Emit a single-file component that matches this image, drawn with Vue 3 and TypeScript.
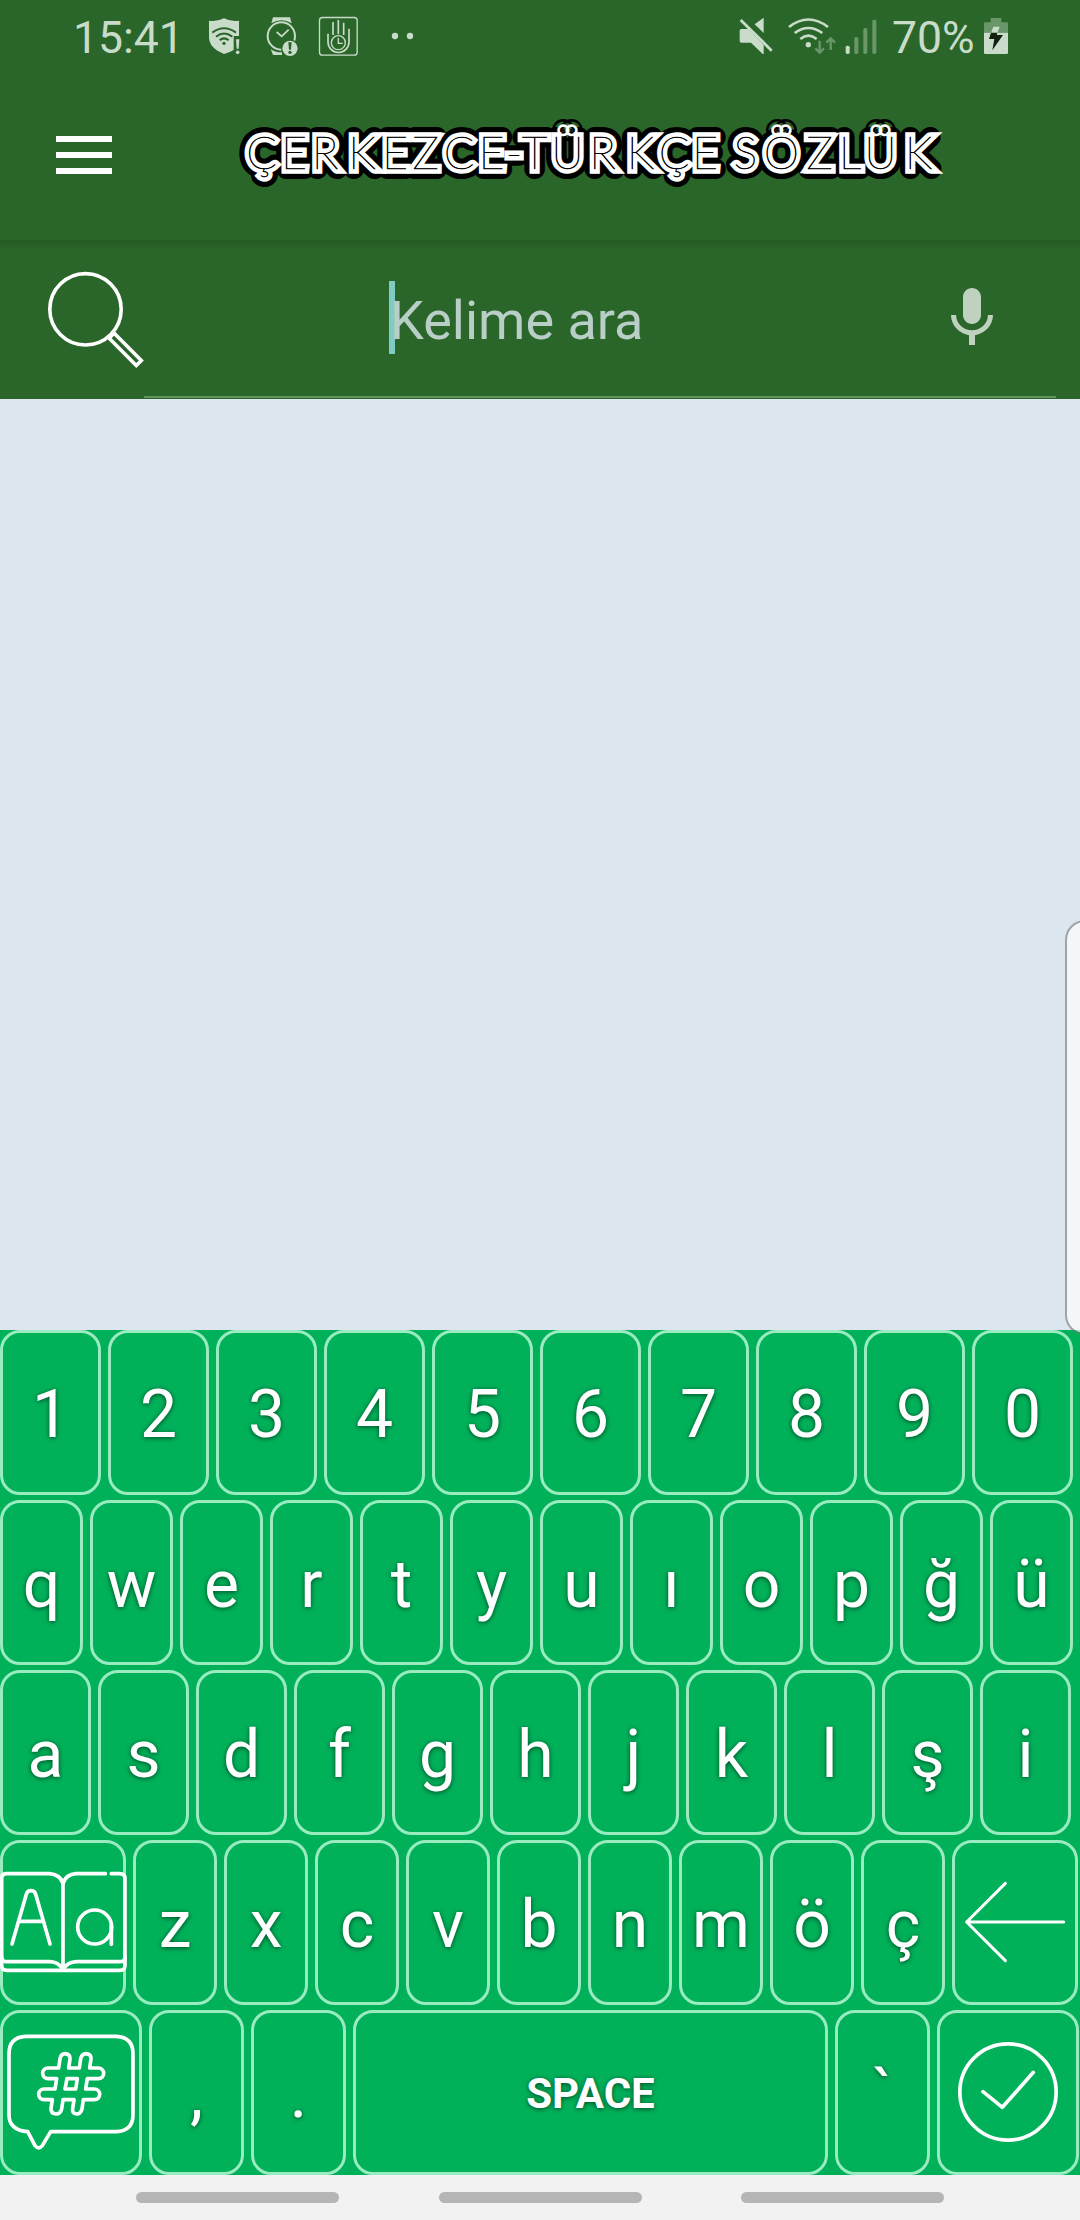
<script setup lang="ts">
interface Key {
  label: string
  width: number
  kind?: 'shift' | 'symbols' | 'back' | 'done' | 'space'
}

const letters = (chars: string, width: number): Key[] =>
  [...chars].map((label) => ({ label, width }))

const rows: Key[][] = [
  letters('1234567890', 101),
  letters('qwertyuıopğü', 83),
  letters('asdfghjklşi', 91),
  [
    { label: 'Shift', width: 126, kind: 'shift' },
    ...letters('zxcvbnmöç', 84),
    { label: 'Backspace', width: 126, kind: 'back' },
  ],
  [
    { label: 'Symbols', width: 142, kind: 'symbols' },
    { label: ',', width: 95 },
    { label: '.', width: 95 },
    { label: 'SPACE', width: 475, kind: 'space' },
    { label: '`', width: 95 },
    { label: 'Done', width: 142, kind: 'done' },
  ],
]

const title = 'ÇERKEZCE-TÜRKÇE SÖZLÜK'
const titleCentres = [
  261.5, 294, 325, 362, 395, 425.5, 459, 491.5, 514, 534.5, 567.5, 602.5, 640.5, 674, 705,
  725, 745.5, 781.5, 819.5, 850, 880.5, 918.5,
]
  .map((x) => x - 230)
  .join(' ')
</script>

<template>
  <div class="screen">
    <header class="top">
      <div class="status">
        <span class="clock">15:41</span>
        <svg class="shield" width="32" height="42" viewBox="504 45 96 126">
          <path fill="#c9dcc9" d="M507 62Q530 66 552 55Q574 66 597 62V108H581V150Q568 158 552 162Q507 144 507 112Z" />
          <g fill="none" stroke="#2a662a" stroke-width="6">
            <path d="M517 98Q552 72 588 98" />
            <path d="M528 110Q552 91 577 110" />
            <path d="M539 121Q552 109 566 121" />
          </g>
          <circle cx="552" cy="130" r="5" fill="#2a662a" />
          <path fill="#c9dcc9" d="M588 118H598L596 146H590Z" />
          <circle cx="593" cy="157" r="5.5" fill="#c9dcc9" />
        </svg>
        <svg class="watch" width="33" height="42" viewBox="678 45 99 126">
          <path fill="#c9dcc9" d="M699 52H750L755 70Q724 52 694 70ZM692 147Q706 158 726 157V165H699Z" />
          <circle cx="724" cy="108" r="41" fill="none" stroke="#c9dcc9" stroke-width="6" />
          <path fill="none" stroke="#c9dcc9" stroke-width="5" d="M710 96L725 109L746 89" />
          <circle cx="750" cy="145" r="27" fill="#2a662a" />
          <circle cx="750" cy="145" r="23" fill="#c9dcc9" />
          <path fill="#2a662a" d="M745 127H755L753 149H747Z" />
          <circle cx="750" cy="157" r="5" fill="#2a662a" />
        </svg>
        <svg class="hand" width="41" height="42" viewBox="834 45 123 126" fill="none" stroke="#c9dcc9">
          <rect x="838.500" y="52.500" width="113" height="113" rx="9" stroke-width="4" />
          <path stroke-width="5" d="M864 101V126A31 31 0 0 0 927 126V86M879 66V105M895 60V103M911 68V105" />
          <circle cx="895" cy="128" r="21" stroke-width="4" />
          <path stroke-width="4" d="M895 114V130H908" />
        </svg>
        <svg class="more" width="23" height="42" viewBox="1053 45 69 126" fill="#c9dcc9">
          <circle cx="1065" cy="108" r="9.500" />
          <circle cx="1110" cy="108" r="9.500" />
        </svg>

        <svg class="mute" width="34" height="42" viewBox="114 45 102 126" fill="#c9dcc9">
          <path d="M188 53V99L161 73Z" />
          <path d="M121 87H142L188 134V162H185L150 128H121Q116 128 116 123V92Q116 87 121 87Z" />
          <path d="M122 57L215 149L209 155L116 63Z" />
        </svg>
        <svg class="wifi" width="50" height="42" viewBox="258 45 150 126">
          <g fill="none" stroke="#c9dcc9" stroke-width="8">
            <path d="M264 81Q322 36 381 81" />
            <path d="M281 99Q322 69 364 99" />
            <path d="M298 117Q322 97 347 117" />
          </g>
          <circle cx="322" cy="134" r="8" fill="#c9dcc9" />
          <path fill="none" stroke="#6a976a" stroke-width="7" d="M356 122V157M343 145L356 158L369 145M389 150V116M376 128L389 115L402 128" />
        </svg>
        <svg class="signal" width="32" height="42" viewBox="432 45 96 126" fill="#6a976a">
          <rect x="434" y="137" width="12" height="25" rx="5" fill="#c9dcc9" />
          <rect x="460" y="111" width="12" height="51" rx="5" />
          <rect x="487" y="84" width="12" height="78" rx="5" />
          <rect x="514" y="59" width="12" height="103" rx="5" />
        </svg>
        <span class="percent">70%</span>
        <svg class="battery" width="26" height="42" viewBox="846 45 78 126">
          <path fill="#6a976a" d="M869 54H901V67H917Q921 67 921 71V98H849V71Q849 67 853 67H869Z" />
          <path fill="#c9dcc9" d="M849 98H921V158Q921 162 917 162H853Q849 162 849 158Z" />
          <path fill="#c9dcc9" d="M877 80H896L889 99H870Z" />
          <path fill="#10210f" d="M870 98H889L887 105H906L874 151L880 117H864Z" />
        </svg>
      </div>
      <div class="bar">
        <button class="menu" aria-label="Menu"><i /><i /><i /></button>
        <svg class="title" width="724" height="90" role="heading" aria-level="1">
          <text class="edge" :x="titleCentres" y="59">{{ title }}</text>
          <text class="face" :x="titleCentres" y="59">{{ title }}</text>
          <text class="inline" :x="titleCentres" y="59">{{ title }}</text>
        </svg>
      </div>
    </header>

    <section class="search">
      <svg class="lens" width="144" height="159" viewBox="0 240 144 159" fill="none" stroke="#fff" stroke-width="3.600">
        <circle cx="85.500" cy="309.300" r="35.700" />
        <path d="M114.200 333.200L141.300 360.500L136.300 365.500L109.200 338.200" />
        <path d="M108 339.300L115.300 332" />
      </svg>
      <div class="field">
        <span class="caret" />
        <span class="hint">Kelime ara</span>
        <svg class="mic" width="72" height="72" viewBox="0 0 24 24" fill="#bfd1bf">
          <path d="M12 14c1.660 0 3-1.340 3-3V5c0-1.660-1.340-3-3-3S9 3.340 9 5v6c0 1.660 1.340 3 3 3zm5.300-3c0 3-2.540 5.100-5.300 5.100S6.700 14 6.700 11H5c0 3.410 2.720 6.230 6 6.720V21h2v-3.280c3.280-.48 6-3.300 6-6.720h-1.700z" />
        </svg>
      </div>
    </section>

    <main class="results" />

    <section class="keyboard">
      <div v-for="(row, r) in rows" :key="r" class="row">
        <button
          v-for="key in row"
          :key="key.label"
          class="key"
          :class="key.kind"
          :style="{ width: key.width + 'px' }"
          :aria-label="key.label"
        >
          <svg v-if="key.kind === 'shift'" width="126" height="165" viewBox="0 60 378 495" stroke-width="11">
            <path d="M189 448Q175 426 150 425H20Q5 425 5 410V176Q5 161 20 161H148Q180 163 189 190V448Q203 426 230 425H360Q375 425 375 410" />
            <path d="M189 190Q198 163 228 161H316M334 161H358Q375 161 375 176V436Q375 451 360 451H20Q5 451 5 436V410" />
            <path d="M36 372L79 223Q82 212 93 212T107 223L150 372M57 304H130" />
            <circle cx="284" cy="321" r="51" />
            <path d="M334 373V315" />
          </svg>
          <svg v-else-if="key.kind === 'symbols'" width="142" height="165" viewBox="0 570 426 495" stroke-width="11">
            <path d="M77 649H349Q399 652 399 701V884Q399 932 349 935H152L127 977Q116 990 105 977L83 935Q27 930 27 884V701Q27 652 77 649Z" />
            <path d="M176 744L180 716Q183 701 196 701Q211 703 210 717L206 744H238L242 716Q246 701 259 701Q274 703 273 717L269 744H295A16 16 0 0 1 295 776H262L257 807H283A16 16 0 0 1 283 839H250L246 867Q242 882 230 882Q215 880 218 866L222 839H189L185 867Q181 882 168 882Q152 880 153 866L157 839H132A16 16 0 0 1 132 807H165L170 776H144A16 16 0 0 1 144 744Z" />
            <path d="M201 776H232L227 807H195Z" />
          </svg>
          <svg v-else-if="key.kind === 'back'" width="126" height="165" viewBox="576 60 378 495" stroke-width="9">
            <path d="M911 306H620M736 190L620 306L736 422" />
          </svg>
          <svg v-else-if="key.kind === 'done'" width="142" height="165" viewBox="531 570 426 495" stroke-width="11">
            <circle cx="744" cy="816" r="144.500" />
            <path d="M669 815L727 862L820 757" />
          </svg>
          <template v-else>{{ key.label }}</template>
        </button>
      </div>
    </section>

    <nav class="system"><i /><i /><i /></nav>
    <div class="edge-panel" />
  </div>
</template>

<style>
body {
  margin: 0;
}
</style>

<style scoped>
.screen {
  position: relative;
  display: flex;
  flex-direction: column;
  width: 1080px;
  height: 2220px;
  overflow: hidden;
  background: #dce6ee;
  font-family: Roboto, 'Noto Sans', sans-serif;
}
svg {
  display: block;
  flex: none;
}
button {
  margin: 0;
  padding: 0;
  border: 0;
  background: none;
  font: inherit;
}
.top {
  height: 240px;
  background: #2a662a;
}
.status {
  display: flex;
  box-sizing: border-box;
  height: 75px;
  padding: 15px 71px 0 73px;
  color: #c9dcc9;
  font-size: 44.500px;
  line-height: 46px;
}
.clock {
  width: 135px;
}
.watch {
  margin-left: 26px;
}
.hand {
  margin-left: 19px;
}
.more {
  margin-left: 32px;
}
.mute {
  margin-left: auto;
}
.wifi {
  margin-left: 14px;
}
.signal {
  margin-left: 8px;
}
.percent {
  width: 91px;
  margin-left: 15px;
  white-space: nowrap;
}
.bar {
  display: flex;
  align-items: flex-start;
  padding: 35px 0 0 56px;
}
.menu {
  display: flex;
  flex-direction: column;
  gap: 10px;
  width: 56px;
  margin-top: 26px;
}
.menu i {
  height: 6px;
  background: #fff;
}
.title {
  margin-left: 118px;
  overflow: visible;
  font-family: Lato, sans-serif;
  font-size: 45px;
  font-weight: 100;
}
.title text {
  text-anchor: middle;
}
.edge {
  fill: #000;
  stroke: #000;
  stroke-width: 20px;
  stroke-linejoin: round;
}
.face {
  fill: #fff;
  stroke: #fff;
  stroke-width: 9.500px;
}
.inline {
  fill: #000;
  stroke: #000;
  stroke-width: 0.600px;
}
.search {
  display: flex;
  height: 159px;
  background: linear-gradient(#245a24, #2a662a 9px);
}
.field {
  display: flex;
  box-sizing: border-box;
  width: 912px;
  height: 158px;
  padding-left: 245px;
  border-bottom: 2px solid #63935f;
}
.caret {
  width: 6px;
  height: 73px;
  margin-top: 41px;
  background: #80cbc4;
}
.hint {
  width: 541px;
  margin: 49px 0 0 -5px;
  color: #b8cec6;
  font-size: 54px;
  line-height: 64px;
}
.mic {
  margin-top: 42px;
  margin-left: 5px;
}
.results {
  height: 931px;
}
.keyboard {
  display: flex;
  flex-direction: column;
  gap: 5px;
  height: 845px;
  background: #00b15a;
}
.row {
  display: flex;
  gap: 7px;
}
.key {
  display: flex;
  flex: none;
  align-items: center;
  justify-content: center;
  box-sizing: border-box;
  height: 165px;
  padding-top: 4px;
  border: 3px solid #99ebc0;
  border-radius: 20px;
  color: #fff;
  font-size: 66px;
  text-shadow: 0 1px 5px rgba(0, 0, 0, 0.6);
}
.key svg {
  margin-top: -4px;
  overflow: visible;
  fill: none;
  stroke: #fff;
  stroke-linecap: round;
  stroke-linejoin: round;
}
.space {
  padding-top: 2px;
  font-size: 42px;
  font-weight: 700;
}
.system {
  display: flex;
  gap: 99.500px;
  height: 28px;
  padding: 17px 0 0 136px;
  background: #f2f2f2;
}
.system i {
  width: 203px;
  height: 11px;
  border-radius: 6px;
  background: #b5b5b5;
}
.edge-panel {
  position: absolute;
  top: 920px;
  left: 1065px;
  box-sizing: border-box;
  width: 60px;
  height: 415px;
  border: 2px solid rgba(120, 120, 120, 0.6);
  border-radius: 20px;
  background: rgba(255, 255, 255, 0.68);
  background-clip: padding-box;
}
</style>
